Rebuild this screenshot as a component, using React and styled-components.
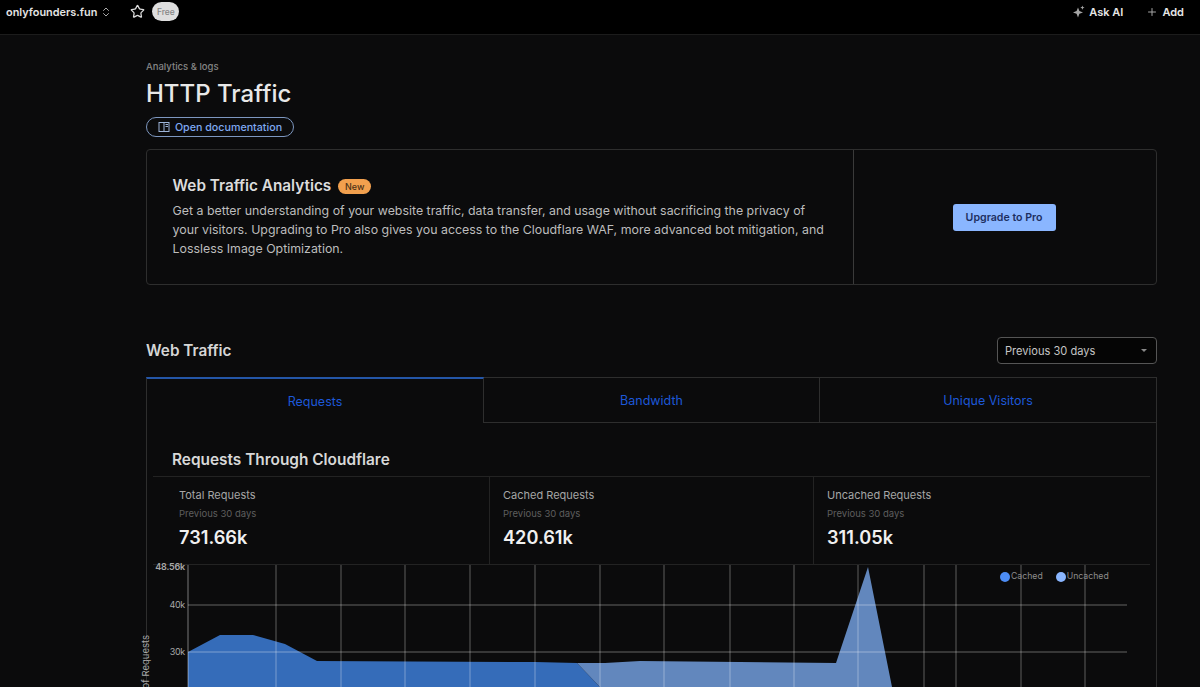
import React from 'react';
import styled, { createGlobalStyle } from 'styled-components';
import { ChevronsUpDown, Plus, Star } from 'lucide-react';

const GlobalStyle = createGlobalStyle`
  html, body {
    margin: 0;
    height: 100%;
    overflow: hidden;
    background: #0b0b0c;
  }
  * {
    box-sizing: border-box;
  }
  body {
    font-family: Inter, "Liberation Sans", sans-serif;
    color: #d9d9d9;
  }
`;

const Page = styled.div`
  height: 687px;
  overflow: hidden;
  background: #0b0b0c;
`;

const TopBar = styled.header`
  height: 35px;
  display: flex;
  align-items: flex-start;
  justify-content: space-between;
  padding: 0 16px 0 6px;
  background: #000;
  border-bottom: 1px solid #1c1c1c;
`;

const BarGroup = styled.div`
  display: flex;
  align-items: center;
  height: 23px;
`;

const SiteName = styled.span`
  font-size: 10.9px;
  font-weight: 600;
  color: #e4e4e4;
`;

const Selector = styled.span`
  display: flex;
  margin-left: 3px;
  color: #aaa;
`;

const StarButton = styled.span`
  display: flex;
  margin-left: 18px;
  color: #ddd;
`;

const PlanBadge = styled.span`
  width: 27px;
  height: 19px;
  margin-left: 7px;
  border-radius: 10px;
  background: #dedede;
  color: #858585;
  font-size: 8.5px;
  font-weight: 500;
  display: flex;
  align-items: center;
  justify-content: center;
`;

const BarAction = styled.span`
  display: flex;
  align-items: center;
  gap: ${props => props.$gap}px;
  margin-left: ${props => props.$offset}px;
  font-size: 11px;
  font-weight: 600;
  color: #e6e6e6;
  svg {
    color: #a5a5a5;
  }
`;

const Main = styled.main`
  width: 1011px;
  margin-left: 146px;
`;

const Breadcrumb = styled.div`
  margin-top: 26px;
  font-size: 9.5px;
  line-height: 12px;
  font-weight: 500;
  color: #858585;
`;

const PageTitle = styled.h1`
  margin: 5px 0 0;
  font-size: 24px;
  line-height: 32px;
  font-weight: 500;
  color: #e8e8e8;
`;

const DocsLink = styled.a`
  width: 148px;
  height: 20px;
  margin-top: 7px;
  display: flex;
  align-items: center;
  justify-content: center;
  gap: 5px;
  border: 1px solid #7d97c0;
  border-radius: 10px;
  font-size: 10.7px;
  font-weight: 500;
  color: #7fa9f2;
  svg {
    color: #9db4d8;
  }
`;

const Banner = styled.section`
  height: 136px;
  margin-top: 12px;
  display: grid;
  grid-template-columns: 707px 1fr;
  border: 1px solid #2e2e2e;
  border-radius: 4px;
`;

const BannerBody = styled.div`
  padding: 26px 20px 0 25.5px;
  border-right: 1px solid #3a3a3a;
`;

const BannerHeading = styled.div`
  display: flex;
  align-items: center;
  gap: 7px;
  height: 20px;
`;

const BannerTitle = styled.h2`
  margin: 0;
  font-size: 15.3px;
  line-height: 20px;
  font-weight: 600;
  color: #dcdcdc;
`;

const NewTag = styled.span`
  width: 33px;
  height: 15px;
  border-radius: 8px;
  background: #f2a04e;
  color: #4c3117;
  font-size: 9px;
  font-weight: 500;
  display: flex;
  align-items: center;
  justify-content: center;
`;

const BannerText = styled.p`
  margin: 5px 0 0;
  font-size: 12.38px;
  line-height: 19px;
  color: #bdbdbd;
`;

const BannerAside = styled.div`
  display: flex;
  align-items: center;
  justify-content: center;
  padding-right: 2px;
`;

const UpgradeButton = styled.button`
  width: 103px;
  height: 27px;
  padding: 0;
  border: 0;
  border-radius: 3px;
  background: #8ab6ff;
  color: #1d2f5f;
  font-family: inherit;
  font-size: 10.6px;
  font-weight: 600;
`;

const SectionHead = styled.div`
  height: 27px;
  margin-top: 52px;
  display: flex;
  align-items: center;
  justify-content: space-between;
`;

const SectionTitle = styled.h2`
  margin: 0;
  font-size: 15.3px;
  font-weight: 600;
  color: #d6d6d6;
`;

const RangeSelect = styled.div`
  width: 160px;
  height: 27px;
  padding: 0 9px 0 7px;
  display: flex;
  align-items: center;
  justify-content: space-between;
  background: #050505;
  border: 1px solid #555;
  border-radius: 4px;
  font-size: 11.1px;
  color: #c6c6c6;
`;

const Caret = styled.span`
  width: 0;
  height: 0;
  border-left: 3px solid transparent;
  border-right: 3px solid transparent;
  border-top: 3px solid #888;
`;

const Card = styled.section`
  margin-top: 13px;
  border: solid #2e2e2e;
  border-width: 0 1px;
`;

const Tabs = styled.div`
  display: grid;
  grid-template-columns: 338px 336px 1fr;
  height: 46px;
  margin: 0 -1px;
`;

const Tab = styled.div`
  display: flex;
  align-items: center;
  justify-content: center;
  font-size: 12.5px;
  color: #1d58d8;
  border-top: ${props => (props.$active ? '2px solid #2456a8' : '1px solid #2e2e2e')};
  border-right: 1px solid #2e2e2e;
  border-bottom: ${props => (props.$active ? '0' : '1px solid #2e2e2e')};
  border-left: ${props => (props.$active ? '1px solid #2e2e2e' : '0')};
`;

const CardTitle = styled.h3`
  margin: 0;
  height: 53px;
  padding: 27px 0 0 25px;
  font-size: 15.4px;
  line-height: 20px;
  font-weight: 600;
  color: #d8d8d8;
`;

const Stats = styled.div`
  height: 89px;
  margin: 0 6px;
  display: grid;
  grid-template-columns: 336px 324px 1fr;
  border: solid #232323;
  border-width: 1px 0;
`;

const Stat = styled.div`
  padding: 12px 0 0 ${props => (props.$first ? 26 : 13)}px;
  border-left: ${props => (props.$first ? '0' : '1px solid #232323')};
`;

const StatLabel = styled.div`
  font-size: 11px;
  line-height: 13px;
  color: #a6a6a6;
`;

const StatPeriod = styled.div`
  margin-top: 6px;
  font-size: 9.5px;
  line-height: 12px;
  color: #5e5e5e;
`;

const StatValue = styled.div`
  margin-top: 5px;
  font-size: 18.2px;
  line-height: 24px;
  font-weight: 600;
  color: #f0f0f0;
`;

const ChartWrap = styled.div`
  position: relative;
  height: 130px;
`;

const ChartSvg = styled.svg`
  display: block;
  width: 1009px;
  height: 130px;
  overflow: visible;
  text {
    font-family: Inter, "Liberation Sans", sans-serif;
    fill: #a8a8a8;
  }
`;

const Legend = styled.div`
  position: absolute;
  top: 6px;
  left: 853px;
  display: flex;
  gap: 13px;
`;

const LegendItem = styled.span`
  display: flex;
  align-items: center;
  gap: 1px;
  font-size: 8.7px;
  line-height: 11px;
  color: #8d8d8d;
`;

const LegendDot = styled.span`
  width: 10px;
  height: 10px;
  border-radius: 50%;
  background: ${props => props.$color};
`;

// chart coordinates are page x minus 147, page y minus 564
const gridX = [41, 129, 194, 258, 323, 388, 453, 517, 583, 647, 711, 777, 809, 874, 938];
const gridY = [41, 88];
const cachedArea = '41,88 73,71 106,71 138,80 170,97 388,98 430,99 453,123 41,123';
const uncachedArea = '430,99 458,99 493,97 689,99 721,3 745,123 453,123';

function TrafficChart() {
  return (
    <ChartSvg viewBox="0 1 1009 130">
      <polygon points={cachedArea} fill="#356cb9" />
      <polygon points={uncachedArea} fill="#6287bd" />
      <rect x="41" y="123" width="704" height="8" fill="#6287bd" />
      <rect x="41" y="123" width="412" height="8" fill="#356cb9" />
      {gridY.map(y => (
        <line key={y} x1="41" x2="980" y1={y} y2={y} stroke="#fff" strokeOpacity="0.36" />
      ))}
      {gridX.map(x => (
        <line key={x} x1={x} x2={x} y1="1" y2="131" stroke="#fff" strokeOpacity={x === 41 ? 0.45 : 0.34} />
      ))}
      <text x="38" y="6" textAnchor="end" fontSize="9" fontWeight="600" letterSpacing="-0.2">48.56k</text>
      <text x="38" y="44" textAnchor="end" fontSize="9" letterSpacing="-0.3">40k</text>
      <text x="38" y="91" textAnchor="end" fontSize="9" letterSpacing="-0.3">30k</text>
      <text transform="translate(2 71) rotate(-90)" textAnchor="end" fontSize="9.5"># of Requests</text>
    </ChartSvg>
  );
}

function Sparkle() {
  return (
    <svg width="13" height="13" viewBox="0 0 13 13" fill="currentColor">
      <path d="M6 2.5 7.4 6 11 7.4 7.4 8.8 6 12.4 4.6 8.8 1 7.4 4.6 6Z" />
      <path d="M10.4 0.5 11 2 12.5 2.6 11 3.2 10.4 4.7 9.8 3.2 8.3 2.6 9.8 2Z" />
    </svg>
  );
}

function DocsIcon() {
  return (
    <svg width="12" height="12" viewBox="0 0 12 12" fill="none" stroke="currentColor" strokeWidth="1">
      <rect x="1" y="1.5" width="10" height="9" />
      <path d="M6 1.5v9M7.5 3.5H10M7.5 5.5H10" />
    </svg>
  );
}

const stats = [
  { label: 'Total Requests', value: '731.66k' },
  { label: 'Cached Requests', value: '420.61k' },
  { label: 'Uncached Requests', value: '311.05k' },
];

export default function App() {
  return (
    <Page>
      <GlobalStyle />
      <TopBar>
        <BarGroup>
          <SiteName>onlyfounders.fun</SiteName>
          <Selector>
            <ChevronsUpDown size={12} />
          </Selector>
          <StarButton>
            <Star size={15} />
          </StarButton>
          <PlanBadge>Free</PlanBadge>
        </BarGroup>
        <BarGroup>
          <BarAction $gap={4} $offset={0}>
            <Sparkle />
            Ask AI
          </BarAction>
          <BarAction $gap={4} $offset={23}>
            <Plus size={12} />
            Add
          </BarAction>
        </BarGroup>
      </TopBar>
      <Main>
        <Breadcrumb>Analytics &amp; logs</Breadcrumb>
        <PageTitle>HTTP Traffic</PageTitle>
        <DocsLink>
          <DocsIcon />
          Open documentation
        </DocsLink>
        <Banner>
          <BannerBody>
            <BannerHeading>
              <BannerTitle>Web Traffic Analytics</BannerTitle>
              <NewTag>New</NewTag>
            </BannerHeading>
            <BannerText>
              Get a better understanding of your website traffic, data transfer, and usage without sacrificing the
              privacy of your visitors. Upgrading to Pro also gives you access to the Cloudflare WAF, more advanced bot
              mitigation, and Lossless Image Optimization.
            </BannerText>
          </BannerBody>
          <BannerAside>
            <UpgradeButton>Upgrade to Pro</UpgradeButton>
          </BannerAside>
        </Banner>
        <SectionHead>
          <SectionTitle>Web Traffic</SectionTitle>
          <RangeSelect>
            Previous 30 days
            <Caret />
          </RangeSelect>
        </SectionHead>
        <Card>
          <Tabs>
            <Tab $active>Requests</Tab>
            <Tab>Bandwidth</Tab>
            <Tab>Unique Visitors</Tab>
          </Tabs>
          <CardTitle>Requests Through Cloudflare</CardTitle>
          <Stats>
            {stats.map((stat, index) => (
              <Stat key={stat.label} $first={index === 0}>
                <StatLabel>{stat.label}</StatLabel>
                <StatPeriod>Previous 30 days</StatPeriod>
                <StatValue>{stat.value}</StatValue>
              </Stat>
            ))}
          </Stats>
          <ChartWrap>
            <TrafficChart />
            <Legend>
              <LegendItem>
                <LegendDot $color="#4d8df5" />
                Cached
              </LegendItem>
              <LegendItem>
                <LegendDot $color="#8ab6ff" />
                Uncached
              </LegendItem>
            </Legend>
          </ChartWrap>
        </Card>
      </Main>
    </Page>
  );
}
